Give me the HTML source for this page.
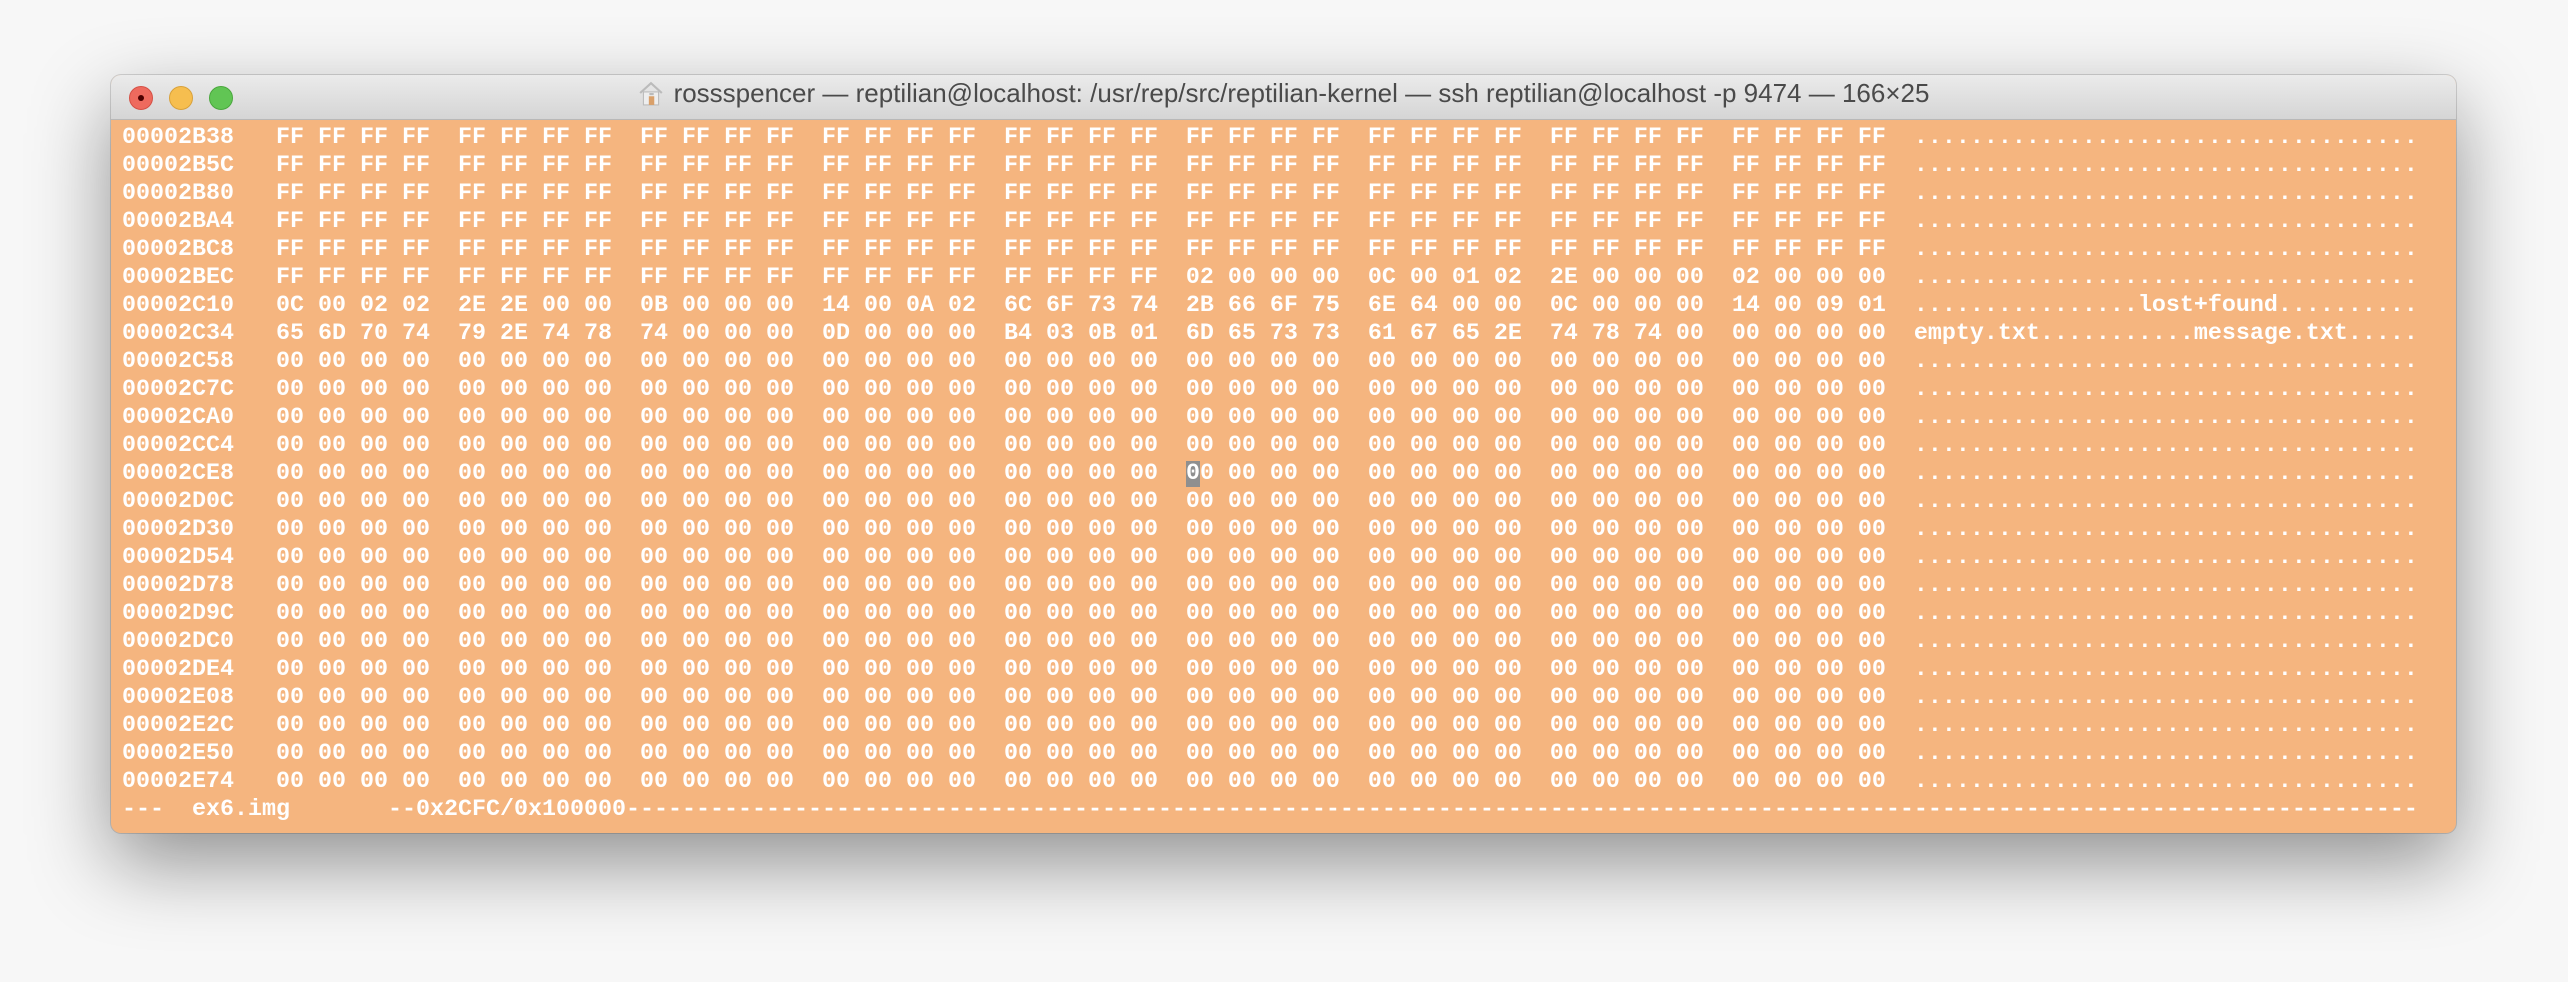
<!DOCTYPE html>
<html><head><meta charset="utf-8"><style>
html,body{margin:0;padding:0;width:2568px;height:982px;background:#f7f7f7;overflow:hidden}
.win{position:absolute;left:111px;top:75px;width:2345px;height:758px;border-radius:10px;overflow:hidden;box-shadow:0 30px 80px rgba(0,0,0,.42),0 0 0 1px rgba(0,0,0,.14);background:#f5b57f}
.tb{position:absolute;left:0;top:0;width:100%;height:44px;background:linear-gradient(#ebebeb,#d5d5d5);border-bottom:1px solid #b8b8b8}
.btn{position:absolute;top:11px;width:22px;height:22px;border-radius:50%}
.title{position:absolute;left:0;right:0;top:3px;height:44px;line-height:44px;text-align:center;font:26px "Liberation Sans",sans-serif;color:#4a4a4a}
pre{position:absolute;left:11px;top:49px;margin:0;font:23.33px/28px "Liberation Mono",monospace;color:#fff;font-weight:bold}
.c{background:#8f8f8f}
</style></head><body>
<div class="win">
<div class="tb">
<div class="btn" style="left:18px;background:#ee6a5e;border:1px solid #d55045"><div style="position:absolute;left:8px;top:8px;width:6px;height:6px;border-radius:50%;background:#4d0000"></div></div>
<div class="btn" style="left:58px;background:#f6be4f;border:1px solid #d9a13a"></div>
<div class="btn" style="left:98px;background:#61c554;border:1px solid #4aa73d"></div>
<div class="title"><span style="display:inline-block;width:26px;height:26px;vertical-align:-4px;margin-right:10px;position:relative"><svg width="26" height="26" viewBox="0 0 24 24"><path d="M2 12 L12 3 L22 12" fill="none" stroke="#bbb" stroke-width="2"/><rect x="5" y="11" width="14" height="12" fill="#eee" stroke="#bbb"/><rect x="10" y="15" width="5" height="8" fill="#d9a06a"/><rect x="10.5" y="12" width="4" height="2" fill="#bbb"/></svg></span>rossspencer — reptilian@localhost: /usr/rep/src/reptilian-kernel — ssh reptilian@localhost -p 9474 — 166×25</div>
</div>
<pre>00002B38   FF FF FF FF  FF FF FF FF  FF FF FF FF  FF FF FF FF  FF FF FF FF  FF FF FF FF  FF FF FF FF  FF FF FF FF  FF FF FF FF  ....................................
00002B5C   FF FF FF FF  FF FF FF FF  FF FF FF FF  FF FF FF FF  FF FF FF FF  FF FF FF FF  FF FF FF FF  FF FF FF FF  FF FF FF FF  ....................................
00002B80   FF FF FF FF  FF FF FF FF  FF FF FF FF  FF FF FF FF  FF FF FF FF  FF FF FF FF  FF FF FF FF  FF FF FF FF  FF FF FF FF  ....................................
00002BA4   FF FF FF FF  FF FF FF FF  FF FF FF FF  FF FF FF FF  FF FF FF FF  FF FF FF FF  FF FF FF FF  FF FF FF FF  FF FF FF FF  ....................................
00002BC8   FF FF FF FF  FF FF FF FF  FF FF FF FF  FF FF FF FF  FF FF FF FF  FF FF FF FF  FF FF FF FF  FF FF FF FF  FF FF FF FF  ....................................
00002BEC   FF FF FF FF  FF FF FF FF  FF FF FF FF  FF FF FF FF  FF FF FF FF  02 00 00 00  0C 00 01 02  2E 00 00 00  02 00 00 00  ....................................
00002C10   0C 00 02 02  2E 2E 00 00  0B 00 00 00  14 00 0A 02  6C 6F 73 74  2B 66 6F 75  6E 64 00 00  0C 00 00 00  14 00 09 01  ................lost+found..........
00002C34   65 6D 70 74  79 2E 74 78  74 00 00 00  0D 00 00 00  B4 03 0B 01  6D 65 73 73  61 67 65 2E  74 78 74 00  00 00 00 00  empty.txt...........message.txt.....
00002C58   00 00 00 00  00 00 00 00  00 00 00 00  00 00 00 00  00 00 00 00  00 00 00 00  00 00 00 00  00 00 00 00  00 00 00 00  ....................................
00002C7C   00 00 00 00  00 00 00 00  00 00 00 00  00 00 00 00  00 00 00 00  00 00 00 00  00 00 00 00  00 00 00 00  00 00 00 00  ....................................
00002CA0   00 00 00 00  00 00 00 00  00 00 00 00  00 00 00 00  00 00 00 00  00 00 00 00  00 00 00 00  00 00 00 00  00 00 00 00  ....................................
00002CC4   00 00 00 00  00 00 00 00  00 00 00 00  00 00 00 00  00 00 00 00  00 00 00 00  00 00 00 00  00 00 00 00  00 00 00 00  ....................................
00002CE8   00 00 00 00  00 00 00 00  00 00 00 00  00 00 00 00  00 00 00 00  <span class="c">0</span>0 00 00 00  00 00 00 00  00 00 00 00  00 00 00 00  ....................................
00002D0C   00 00 00 00  00 00 00 00  00 00 00 00  00 00 00 00  00 00 00 00  00 00 00 00  00 00 00 00  00 00 00 00  00 00 00 00  ....................................
00002D30   00 00 00 00  00 00 00 00  00 00 00 00  00 00 00 00  00 00 00 00  00 00 00 00  00 00 00 00  00 00 00 00  00 00 00 00  ....................................
00002D54   00 00 00 00  00 00 00 00  00 00 00 00  00 00 00 00  00 00 00 00  00 00 00 00  00 00 00 00  00 00 00 00  00 00 00 00  ....................................
00002D78   00 00 00 00  00 00 00 00  00 00 00 00  00 00 00 00  00 00 00 00  00 00 00 00  00 00 00 00  00 00 00 00  00 00 00 00  ....................................
00002D9C   00 00 00 00  00 00 00 00  00 00 00 00  00 00 00 00  00 00 00 00  00 00 00 00  00 00 00 00  00 00 00 00  00 00 00 00  ....................................
00002DC0   00 00 00 00  00 00 00 00  00 00 00 00  00 00 00 00  00 00 00 00  00 00 00 00  00 00 00 00  00 00 00 00  00 00 00 00  ....................................
00002DE4   00 00 00 00  00 00 00 00  00 00 00 00  00 00 00 00  00 00 00 00  00 00 00 00  00 00 00 00  00 00 00 00  00 00 00 00  ....................................
00002E08   00 00 00 00  00 00 00 00  00 00 00 00  00 00 00 00  00 00 00 00  00 00 00 00  00 00 00 00  00 00 00 00  00 00 00 00  ....................................
00002E2C   00 00 00 00  00 00 00 00  00 00 00 00  00 00 00 00  00 00 00 00  00 00 00 00  00 00 00 00  00 00 00 00  00 00 00 00  ....................................
00002E50   00 00 00 00  00 00 00 00  00 00 00 00  00 00 00 00  00 00 00 00  00 00 00 00  00 00 00 00  00 00 00 00  00 00 00 00  ....................................
00002E74   00 00 00 00  00 00 00 00  00 00 00 00  00 00 00 00  00 00 00 00  00 00 00 00  00 00 00 00  00 00 00 00  00 00 00 00  ....................................
---  ex6.img       --0x2CFC/0x100000--------------------------------------------------------------------------------------------------------------------------------</pre>
</div>
</body></html>
